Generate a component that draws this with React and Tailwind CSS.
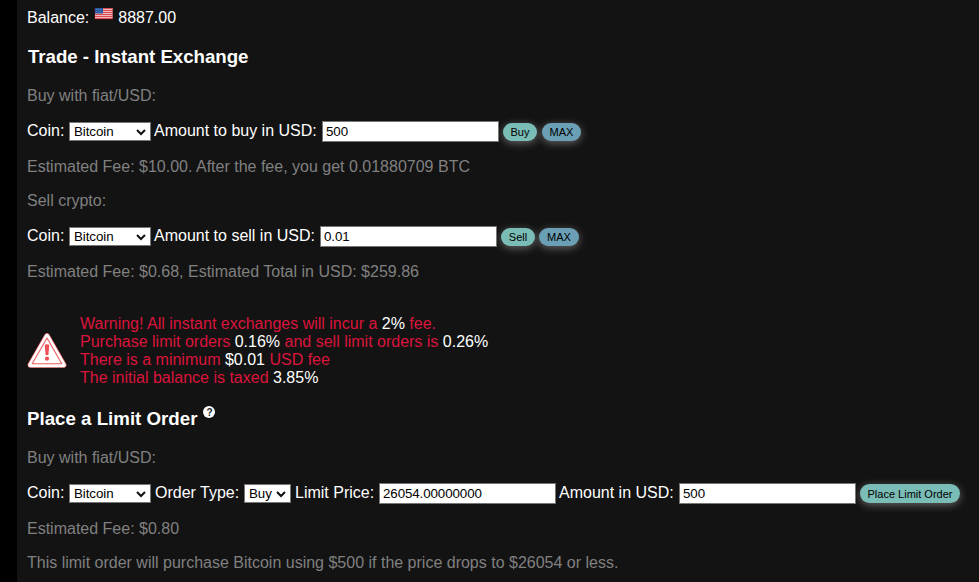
import React from "react";

function Select({ value, className }) {
  return (
    <div className={`mt-px flex h-[19px] shrink-0 items-center justify-between border border-[#767676] bg-white pl-1 pr-[3px] text-[13.333px] leading-[17px] tracking-[-0.06px] text-black ${className}`}>
      <span>{value}</span>
      <svg width="12" height="12" viewBox="0 0 12 12" fill="none" stroke="#101010" strokeWidth="2">
        <path d="M2 4l4 4 4-4" />
      </svg>
    </div>
  );
}

function Input({ value, className = "" }) {
  return (
    <input
      readOnly
      value={value}
      className={`h-[21px] w-[177px] shrink-0 border border-[#767676] bg-white px-[3px] py-0 text-[13.333px] tracking-[-0.09px] text-black outline-none ${className}`}
    />
  );
}

function Pill({ children, className }) {
  return (
    <button className={`shrink-0 rounded-full p-0 text-center text-[11px] leading-[18px] text-black shadow-[0_2px_8px_rgba(255,255,255,0.35)] ${className}`}>
      {children}
    </button>
  );
}

function Label({ children, className = "" }) {
  return <span className={`h-[18px] shrink-0 whitespace-nowrap leading-5 ${className}`}>{children}</span>;
}

function Muted({ children, className }) {
  return <p className={`h-[18px] whitespace-nowrap leading-5 text-[#808080] ${className}`}>{children}</p>;
}

function Flag() {
  return (
    <svg className="mx-[5px] h-3 w-[19px] shrink-0" viewBox="0 0 19 12">
      <rect x="0.5" width="18.5" height="11.5" rx="1" fill="#5c1218" />
      <rect x="1" width="17.5" height="10.5" fill="#efb9bd" />
      {[0, 2, 4, 6, 8, 10].map((y) => (
        <rect key={y} x="1" y={y} width="17.5" height="1" fill="#dc4a53" />
      ))}
      <rect x="1" width="8" height="5.5" fill="#2c59a0" />
      <path d="M2 1.5h6M2 3.5h6" stroke="#5f82bd" strokeWidth=".6" strokeDasharray="1 1" />
    </svg>
  );
}

function WarningIcon() {
  return (
    <svg className="mt-[18px] h-10 w-10 shrink-0" viewBox="0 0 40 40">
      <path d="M20 4L36.6 33H3.4Z" fill="#fff" stroke="#f26a6e" strokeWidth="5.6" strokeLinejoin="round" />
      <path d="M20 4L36.6 33H3.4Z" fill="#fff" stroke="#fff" strokeWidth="4.4" strokeLinejoin="round" />
      <path d="M20 6L34.8 31.7H5.2Z" fill="#fff" stroke="#ee5b60" strokeWidth="1.1" strokeLinejoin="round" />
      <path d="M17.7 12.8q2.3-1.2 4.6 0l-.9 10.2h-2.8z" fill="#ee4e54" />
      <circle cx="20" cy="26.7" r="2.1" fill="#ee4e54" />
    </svg>
  );
}

export default function App() {
  return (
    <div className="flex h-[582px] w-[979px] overflow-hidden bg-black font-['Liberation_Sans',Arial,sans-serif] text-base leading-[18px] text-white">
      <main className="ml-[17px] flex-1 bg-[#131313] pl-[10px] pt-2">
        <div className="flex h-[18px]">
          <Label>Balance:</Label>
          <Flag />
          <Label>8887.00</Label>
        </div>
        <h3 className="ml-px mt-5 h-[21px] text-[18.72px] font-bold leading-[21px] tracking-[-0.04px]">Trade - Instant Exchange</h3>
        <Muted className="mt-[19px]">Buy with fiat/USD:</Muted>
        <div className="mt-[17px] flex h-[21px]">
          <Label className="w-[42px]">Coin:</Label>
          <Select value="Bitcoin" className="w-[82px]" />
          <Label className="ml-[3px] w-[168px]">Amount to buy in USD:</Label>
          <Input value="500" />
          <Pill className="ml-1 mt-0.5 h-[18px] w-[34px] bg-[#7abcb6]">Buy</Pill>
          <Pill className="ml-[5px] mt-0.5 h-[18px] w-[39px] bg-[#6a9fb5]">MAX</Pill>
        </div>
        <Muted className="mt-[15px]">Estimated Fee: $10.00. After the fee, you get 0.01880709 BTC</Muted>
        <Muted className="mt-4">Sell crypto:</Muted>
        <div className="mt-[17px] flex h-[21px]">
          <Label className="w-[42px]">Coin:</Label>
          <Select value="Bitcoin" className="w-[82px]" />
          <Label className="ml-[3px] w-[166px]">Amount to sell in USD:</Label>
          <Input value="0.01" />
          <Pill className="ml-1 mt-0.5 h-[18px] w-[34px] bg-[#7abcb6]">Sell</Pill>
          <Pill className="ml-1 mt-0.5 h-[18px] w-10 bg-[#6a9fb5]">MAX</Pill>
        </div>
        <Muted className="mt-[15px]">Estimated Fee: $0.68, Estimated Total in USD: $259.86</Muted>
        <section className="mt-[34px] flex h-[72px]">
          <WarningIcon />
          <div className="ml-[13px] mt-px whitespace-nowrap text-[#dc143c]">
            <p>Warning! All instant exchanges will incur a <span className="text-white">2%</span> fee.</p>
            <p>Purchase limit orders <span className="text-white">0.16%</span> and sell limit orders is <span className="text-white">0.26%</span></p>
            <p>There is a minimum <span className="text-white">$0.01</span> USD fee</p>
            <p>The initial balance is taxed <span className="text-white">3.85%</span></p>
          </div>
        </section>
        <div className="mt-[22px] flex h-[21px]">
          <h3 className="text-[18.72px] font-bold leading-[21px]">Place a Limit Order</h3>
          <span className="ml-[6px] mt-[-2px] h-3 w-3 rounded-full bg-white text-center text-[10px] font-bold leading-[13px] text-[#222]">?</span>
        </div>
        <Muted className="mt-[19px]">Buy with fiat/USD:</Muted>
        <div className="mt-[17px] flex h-[21px]">
          <Label className="w-[42px]">Coin:</Label>
          <Select value="Bitcoin" className="w-[82px]" />
          <Label className="ml-1 w-[89px]">Order Type:</Label>
          <Select value="Buy" className="w-[47px]" />
          <Label className="ml-1 w-[84px]">Limit Price:</Label>
          <Input value="26054.00000000" />
          <Label className="ml-[3px] w-[120px]">Amount in USD:</Label>
          <Input value="500" />
          <Pill className="ml-1 mt-px h-[19px] w-[100px] bg-[#7abcb6]">Place Limit Order</Pill>
        </div>
        <Muted className="mt-[15px]">Estimated Fee: $0.80</Muted>
        <Muted className="mt-4">This limit order will purchase Bitcoin using $500 if the price drops to $26054 or less.</Muted>
      </main>
    </div>
  );
}
